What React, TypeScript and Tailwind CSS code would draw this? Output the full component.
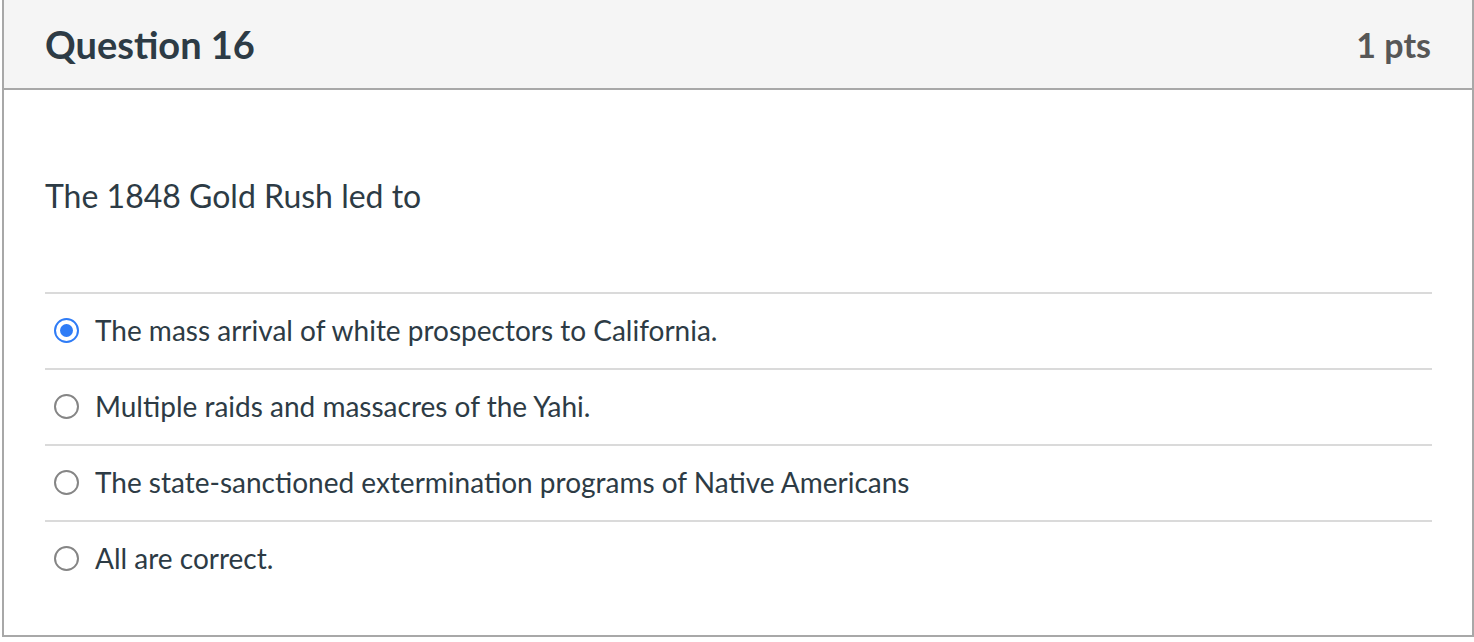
const answers = [
  { text: "The mass arrival of white prospectors to California.", checked: true },
  { text: "Multiple raids and massacres of the Yahi.", checked: false },
  { text: "The state-sanctioned extermination programs of Native Americans", checked: false },
  { text: "All are correct.", checked: false },
];

function Radio({ checked }: { checked: boolean }) {
  if (checked) {
    return (
      <span className="ml-[9px] mr-4 flex h-[25px] w-[25px] flex-shrink-0 items-center justify-center rounded-full border-2 border-[#2f7cf6] bg-white">
        <span className="h-[13px] w-[13px] rounded-full bg-[#2f7cf6]" />
      </span>
    );
  }
  return (
    <span className="ml-[9px] mr-4 h-[25px] w-[25px] flex-shrink-0 rounded-full border-2 border-[#858585] bg-white" />
  );
}

export default function App() {
  return (
    <div className="min-h-screen bg-white font-['Lato','Noto_Sans',sans-serif]">
      <div className="ml-[2px] border-x-2 border-b-2 border-[#a8a8a8] bg-white">
        <div className="flex h-[90px] items-center justify-between border-b-2 border-[#a8a8a8] bg-[#f5f5f5] pl-[41px] pr-[41px]">
          <h2 className="text-[38px] font-bold text-[#2d3b45]">Question 16</h2>
          <span className="text-[34px] font-bold text-[#575757]">1 pts</span>
        </div>

        <div className="pl-[41px] pr-[40px] pb-[39px]">
          <p className="pt-[86px] pb-[76px] text-[32px] leading-[40px] text-[#2d3b45]">
            The 1848 Gold Rush led to
          </p>

          <ul>
            {answers.map((a) => (
              <li
                key={a.text}
                className="flex h-[76px] items-center border-t-2 border-[#dadada] pb-[2px] text-[28px] text-[#2d3b45]"
              >
                <Radio checked={a.checked} />
                <span>{a.text}</span>
              </li>
            ))}
          </ul>
        </div>
      </div>
    </div>
  );
}
